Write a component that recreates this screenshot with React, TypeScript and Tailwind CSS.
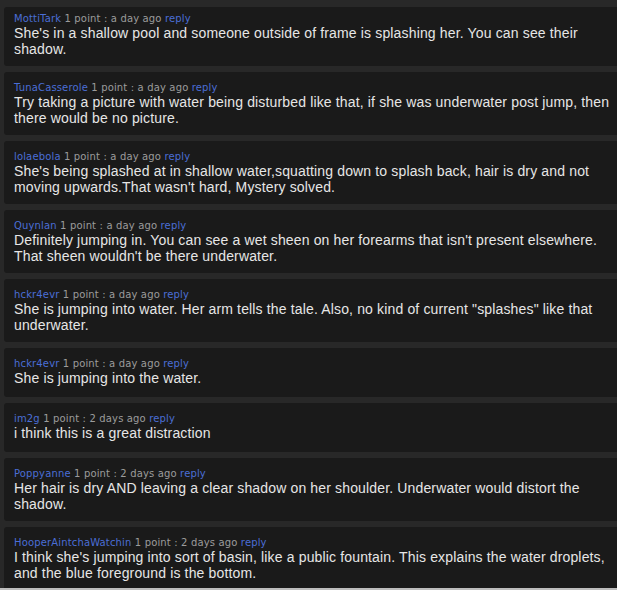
import React from "react";

type C = { user: string; time: string; text: string; first?: boolean };

const comments: C[] = [
  { user: "MottiTark", time: "a day ago", text: "She's in a shallow pool and someone outside of frame is splashing her. You can see their shadow.", first: true },
  { user: "TunaCasserole", time: "a day ago", text: "Try taking a picture with water being disturbed like that, if she was underwater post jump, then there would be no picture." },
  { user: "lolaebola", time: "a day ago", text: "She's being splashed at in shallow water,squatting down to splash back, hair is dry and not moving upwards.That wasn't hard, Mystery solved." },
  { user: "Quynlan", time: "a day ago", text: "Definitely jumping in. You can see a wet sheen on her forearms that isn't present elsewhere. That sheen wouldn't be there underwater." },
  { user: "hckr4evr", time: "a day ago", text: "She is jumping into water. Her arm tells the tale. Also, no kind of current \"splashes\" like that underwater." },
  { user: "hckr4evr", time: "a day ago", text: "She is jumping into the water." },
  { user: "im2g", time: "2 days ago", text: "i think this is a great distraction" },
  { user: "Poppyanne", time: "2 days ago", text: "Her hair is dry AND leaving a clear shadow on her shoulder. Underwater would distort the shadow." },
  { user: "HooperAintchaWatchin", time: "2 days ago", text: "I think she's jumping into sort of basin, like a public fountain. This explains the water droplets, and the blue foreground is the bottom." },
];

function Comment({ c }: { c: C }) {
  return (
    <div
      className={`bg-[#1a1a1a] rounded-[3px] w-[626px] shrink-0 pl-[10px] pr-[10px] pb-[9px] ${c.first ? "pt-[6px] min-h-[45px]" : "pt-[10px] min-h-[49px]"}`}
    >
      <div className="text-[10px] leading-[12px] tracking-[0.15px] text-[#9c9c9c] whitespace-nowrap" style={{ fontFamily: '"DejaVu Sans", Verdana, sans-serif' }}>
        <span className="text-[#4a6ed6]">{c.user}</span> 1 point : {c.time} <span className="text-[#4a6ed6]">reply</span>
      </div>
      <div className="text-[14px] leading-[16px] tracking-[0.15px] text-[#e6e6e6]" style={{ fontFamily: '"Liberation Sans", Arial, sans-serif' }}>
        {c.text}
      </div>
    </div>
  );
}

export default function App() {
  return (
    <div className="w-[617px] h-[590px] bg-[#282828] overflow-hidden flex flex-col">
      <div className="h-[588px] shrink-0 overflow-hidden pl-[4px] pt-[7px] flex flex-col gap-[6px]">
        {comments.map((c, i) => (
          <Comment key={i} c={c} />
        ))}
      </div>
      <div className="h-[2px] shrink-0 bg-[#bdbdbd]" />
    </div>
  );
}
